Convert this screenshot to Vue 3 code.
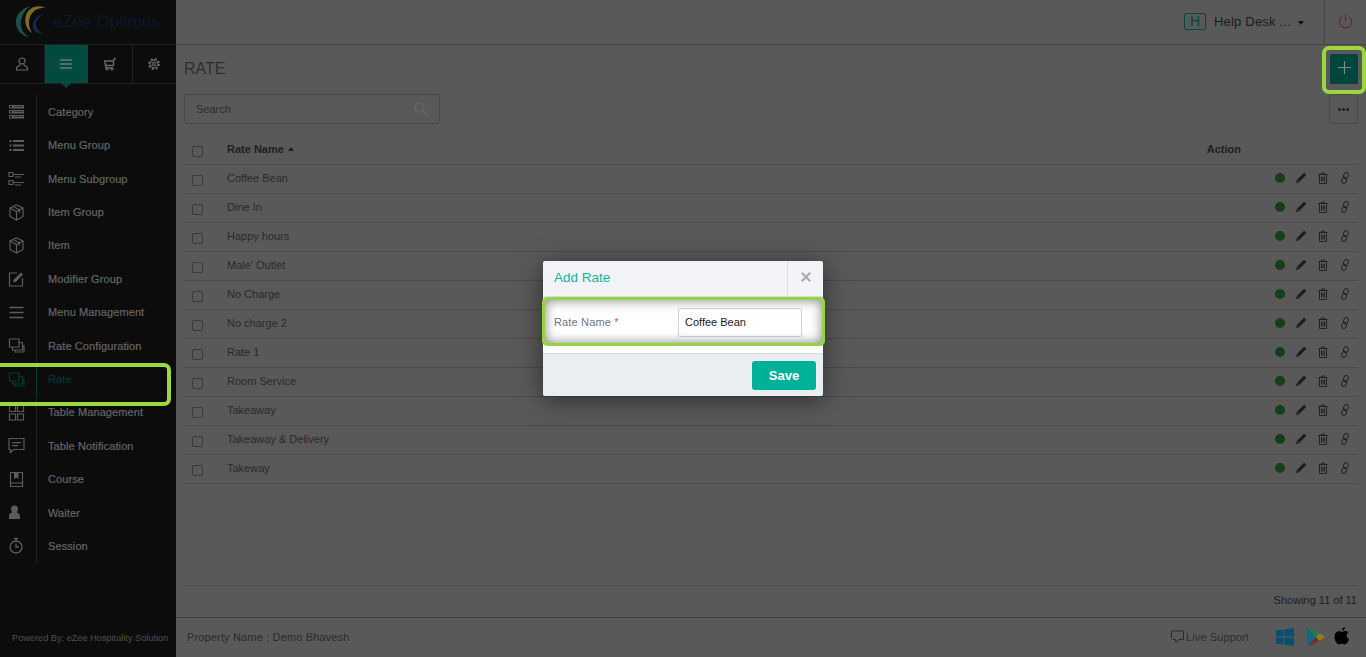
<template>
  <div class="app">
    <aside class="sidebar">
      <div class="logo">
        <svg width="34" height="34" viewBox="0 0 34 34">
          <path d="M15 1C6 4 0 10 1 19c1 7 6 12 13 13C8 28 5 23 6 16 7 10 10 5 15 1z" fill="#1d4f4d" />
          <path d="M31 3C23-1 14 2 11 10c-2 7 0 14 6 18-3-5-4-11-2-16 2-6 9-10 16-9z" fill="#7d6c20" />
          <path d="M29 9c-5 1-10 4-11 10-1 5 3 10 11 10-5-2-8-5-8-10 0-4 3-7 8-10z" fill="#14265a" />
        </svg>
        <span>eZee Optimus</span>
      </div>
      <div class="tabs">
        <div class="tab">
          <svg class="ico" viewBox="0 0 14 14"><circle cx="7" cy="4" r="3" /><path d="M5.5 7.5 1.5 10.5V13h11v-2.500l-4-3" /></svg>
        </div>
        <div class="tab active">
          <svg class="ico bars" viewBox="0 0 14 14"><path d="M1 3h12M1 7h12M1 11h12" /></svg>
        </div>
        <div class="tab">
          <svg class="ico" viewBox="0 0 14 14"><path d="M1 4h9.500l1-2.500H13M2 4l.5 4.500h8L10.500 4M3 8.500V11h7" stroke-width="1.5" /><circle cx="4" cy="12" r="1" /><circle cx="9" cy="12" r="1" /></svg>
        </div>
        <div class="tab">
          <svg class="ico" viewBox="0 0 14 14"><circle cx="7" cy="7" r="1.6" /><circle cx="7" cy="7" r="3.8" /><circle cx="7" cy="7" r="5" stroke-width="2" stroke-dasharray="2 1.93" /></svg>
        </div>
      </div>
      <ul class="nav">
        <li v-for="item in navItems" :key="item.label" :class="{ current: item.label === 'Rate' }">
          <span class="nav-icon">
            <svg width="17" height="17" viewBox="0 0 17 17" v-html="item.icon"></svg>
          </span>
          <span class="nav-label">{{ item.label }}</span>
        </li>
      </ul>
      <div class="powered">Powered By: eZee Hospitality Solution</div>
    </aside>

    <div class="page">
      <header class="topbar">
        <span class="h-box">H</span>
        <span class="help">Help Desk ...</span>
        <span class="caret"></span>
        <div class="power">
          <svg width="15" height="15" viewBox="0 0 15 15"><path d="M4 3a6 6 0 1 0 7 0M7.500 0v7" fill="none" stroke="#6a2626" stroke-width="1.1" /></svg>
        </div>
      </header>

      <main class="content">
        <div class="title-row">
          <h1>RATE</h1>
          <button class="add-btn">
            <svg width="13" height="13" viewBox="0 0 13 13"><path d="M6.500 0v13M0 6.500h13" stroke="#7c8986" stroke-width="1.2" /></svg>
          </button>
        </div>
        <div class="tools-row">
          <div class="search">
            <span>Search</span>
            <svg width="14" height="14" viewBox="0 0 14 14"><circle cx="5.500" cy="5.500" r="4.500" fill="none" stroke="#6a6a6a" stroke-width="1.2" /><path d="m9 9 4.500 4.500" stroke="#6a6a6a" stroke-width="1.6" /></svg>
          </div>
          <button class="more-btn"><i></i><i></i><i></i></button>
        </div>

        <div class="thead">
          <span class="check"></span>
          <span class="col-name">Rate Name <em class="sort"></em></span>
          <span class="col-action">Action</span>
        </div>
        <div v-for="rate in rates" :key="rate" class="row">
          <span class="check"></span>
          <span class="row-name">{{ rate }}</span>
          <span class="actions">
            <span class="dot"></span>
            <svg width="12" height="12" viewBox="0 0 12 12"><path d="M1 11l.8-3L8.500 1.300a1 1 0 0 1 1.400 0l.8.8a1 1 0 0 1 0 1.400L4 10.200z" fill="#1c1c1c" /><path d="M2.200 8.200l1.600 1.600" stroke="#5a5a5a" stroke-width=".6" /></svg>
            <svg width="12" height="12" viewBox="0 0 12 12" fill="none" stroke="#1c1c1c"><path d="M1.500 2.500h9M4.500 2.500v-1.500h3v1.500M2.500 2.500v9h7v-9M4.500 4.500v5M6 4.500v5M7.500 4.500v5" stroke-width=".9" /></svg>
            <svg width="12" height="12" viewBox="0 0 12 12" fill="none" stroke="#1c1c1c" stroke-width=".9"><g transform="rotate(20 6 6)"><rect x="3.800" y=".3" width="4.400" height="6.400" rx="2.200" /><rect x="3.800" y="5.300" width="4.400" height="6.400" rx="2.200" /></g></svg>
          </span>
        </div>

        <div class="spacer"></div>
        <div class="showing">Showing 11 of 11</div>
      </main>

      <footer class="foot">
        <span class="property">Property Name : Demo Bhavesh</span>
        <span class="live">
          <svg width="13" height="14" viewBox="0 0 13 14" fill="none" stroke="#2c2c2c"><path d="M.5 1h12v8.500H8L5 12.500 4.500 9.500H2L.5 8z" /></svg>
          Live Support
        </span>
        <svg class="store" width="18" height="18" viewBox="0 0 18 18" fill="#0a4f6e"><path d="M0 2.600 7.400 1.500v7H0zM8.300 1.400 18 0v8.500H8.300zM0 9.500h7.400v7L0 15.400zM8.300 9.500H18V18L8.300 16.600z" /></svg>
        <svg class="store play" width="19" height="20" viewBox="0 0 19 20"><path d="M1 0v20l9-10z" fill="#0f6b80" /><path d="M1 0l9 10 3.500-4z" fill="#2e7a4a" /><path d="M1 20l9-10 3.500 4z" fill="#7a2e2e" /><path d="M13.500 6 19 10l-5.500 4L10 10z" fill="#8f7f1c" /></svg>
        <svg class="store" width="16" height="19" viewBox="0 0 16 19" fill="#000"><path d="M11 0c.1 1.800-1.300 3.500-3 3.500C7.900 1.800 9.400.2 11 0zM8 4.800c.8 0 1.800-.9 3.300-.9 1.300 0 2.500.6 3.200 1.700-2.700 1.700-2.300 5.400.6 6.700-.8 2.200-2.600 5.200-4.300 5.200-1.100 0-1.500-.7-2.800-.7s-1.800.7-2.800.7C3 17.500.5 13.500.5 10c0-3.600 2.300-5.800 4.400-5.800 1.300 0 2.300.6 3.100.6z" /></svg>
      </footer>
    </div>

    <div class="overlay">
      <div class="modal">
        <div class="modal-head">
          <span class="modal-title">Add Rate</span>
          <span class="modal-close">
            <svg width="10" height="10" viewBox="0 0 10 10"><path d="M.8.800l8.400 8.400M9.200.800.800 9.200" stroke="#a9a9a9" stroke-width="2" /></svg>
          </span>
        </div>
        <div class="modal-body">
          <label for="rate-name">Rate Name <b>*</b></label>
          <input id="rate-name" type="text" value="Coffee Bean" />
        </div>
        <div class="modal-foot">
          <button class="save">Save</button>
        </div>
      </div>
    </div>

    <div class="mark mark-nav"></div>
    <div class="mark mark-add"></div>
    <div class="mark mark-field"></div>
  </div>
</template>

<script setup>
const stroke = 'fill="none" stroke="#5c5c5c" stroke-width="1.2"'

const cube = `<g ${stroke}><path d="M8.500 1 15 4v8.500L8.500 16 2 12.500V4zM2 4l6.500 3.500L15 4M8.500 7.500V16M5 2.500l6.500 3.300v3"/></g>`
const copies = (color) =>
  `<g fill="none" stroke="${color}" stroke-width="1.2"><path d="M1.500 2h9.500v8H1.500zM4.500 10v3h10V5.500H11M7 13v2h9V8"/></g>`

const navItems = [
  {
    label: 'Category',
    icon: `<g fill="#5c5c5c"><path d="M1 2h15v3.500H1zM1 7h15v3.500H1zM1 12h15v3.500H1z"/></g><g fill="#0c0c0c"><path d="M2 3h2v1.500H2zM2 8h2v1.500H2zM2 13h2v1.500H2zM6 3.500h9v.5H6zM6 8.500h9v.5H6zM6 13.500h9v.5H6z"/></g>`,
  },
  {
    label: 'Menu Group',
    icon: `<g fill="#5c5c5c"><path d="M1.500 3h2v2h-2zM1.500 7.500h2v2h-2zM1.500 12h2v2h-2zM5 3h11v2H5zM5 7.500h11v2H5zM5 12h11v2H5z"/></g>`,
  },
  {
    label: 'Menu Subgroup',
    icon: `<g ${stroke}><path d="M1 2.500h4v4H1zM1 10.500h4v4H1z"/></g><g fill="#5c5c5c"><path d="M5 4h11v1H5zM7 6.500h6v1H7zM5 12h11v1H5zM7 14.500h6v1H7z"/></g>`,
  },
  { label: 'Item Group', icon: cube },
  { label: 'Item', icon: cube },
  {
    label: 'Modifier Group',
    icon: `<g ${stroke}><path d="M9 3H1.500v13h13V8"/></g><path d="M5 12.500l.8-3L13 2.500l2 2-7 7.300z" fill="#5c5c5c"/>`,
  },
  {
    label: 'Menu Management',
    icon: `<path d="M1.500 3.500h14M1.500 8.500h14M1.500 13.500h14" fill="none" stroke="#5c5c5c" stroke-width="1.7"/>`,
  },
  { label: 'Rate Configuration', icon: copies('#5c5c5c') },
  { label: 'Rate', icon: copies('#003a32') },
  {
    label: 'Table Management',
    icon: `<g ${stroke}><path d="M1.500 1.500h6v6h-6zM9.500 1.500h6v6h-6zM1.500 10h6v6h-6zM9.500 10h6v6h-6z"/></g>`,
  },
  {
    label: 'Table Notification',
    icon: `<g ${stroke}><path d="M1 1.500h15v11H5.500L2.500 15.500v-3H1z"/></g><path d="M4 5h9v1.200H4zM4 8h6v1.200H4z" fill="#5c5c5c"/>`,
  },
  {
    label: 'Course',
    icon: `<g ${stroke}><path d="M2.500 1.500h12v14h-12zM2.500 12h12"/></g><path d="M6 1.500h4.500V8L8.200 6.500 6 8z" fill="#5c5c5c"/>`,
  },
  {
    label: 'Waiter',
    icon: `<circle cx="6.500" cy="5" r="3.500" fill="#5c5c5c"/><path d="M1 15v-2.500c0-3 2-4.500 5.500-4.500s5.500 1.500 5.500 4.500V15z" fill="#5c5c5c"/>`,
  },
  {
    label: 'Session',
    icon: `<g fill="none" stroke="#5c5c5c" stroke-width="1.3"><circle cx="8" cy="10" r="6"/><path d="M6 1.500h4M8 1.500v2.500M8 6.500V10h3"/></g>`,
  },
]

const rates = [
  'Coffee Bean',
  'Dine In',
  'Happy hours',
  "Male' Outlet",
  'No Charge',
  'No charge 2',
  'Rate 1',
  'Room Service',
  'Takeaway',
  'Takeaway & Delivery',
  'Takeway',
]
</script>

<style>
html,
body {
  margin: 0;
  background: #595959;
}
</style>

<style scoped>
.app {
  display: flex;
  height: 657px;
  overflow: hidden;
  position: relative;
  font-family: "Liberation Sans", Arial, sans-serif;
  font-size: 11px;
  color: #2a2a2a;
  background: #595959;
}

/* the page under the modal is painted already dimmed */
.sidebar {
  width: 176px;
  flex: none;
  background: #0c0c0c;
  display: flex;
  flex-direction: column;
}

.logo {
  height: 44px;
  display: flex;
  align-items: center;
  padding-left: 15px;
  gap: 4px;
  border-bottom: 1px solid #222;
}

.logo span {
  font-size: 17px;
  color: #081a2c;
}

.tabs {
  display: flex;
  height: 38px;
  border-bottom: 1px solid #222;
}

.tab {
  flex: 1;
  display: flex;
  align-items: center;
  justify-content: center;
  border-right: 1px solid #222;
  position: relative;
}

.tab:last-child {
  border-right: 0;
}

.tab.active {
  background: #004a3f;
  border-right: 0;
}

.tab.active::after {
  content: '';
  position: absolute;
  left: 50%;
  bottom: -5px;
  margin-left: -5px;
  border-left: 5px solid transparent;
  border-right: 5px solid transparent;
  border-top: 5px solid #004a3f;
}

.ico {
  width: 14px;
  height: 14px;
  fill: none;
  stroke: #666;
  stroke-width: 1.2;
}

.ico.bars {
  stroke: #6e7a77;
  stroke-width: 1.5;
}

.nav {
  list-style: none;
  margin: 11.2px 0 0;
  padding: 0;
}

.nav li {
  display: flex;
  height: 33.4px;
  align-items: center;
}

.nav-icon {
  width: 37px;
  height: 100%;
  flex: none;
  display: flex;
  align-items: center;
  justify-content: center;
  padding-right: 3px;
  box-sizing: border-box;
  border-right: 1px solid #222;
}

.nav-label {
  padding-left: 11px;
  font-size: 11px;
  letter-spacing: 0.1px;
  color: #666;
  -webkit-text-stroke: 0.2px #666;
}

.nav li.current .nav-icon {
  border-right-color: #003a32;
}

.nav li.current .nav-label {
  color: #003a32;
  -webkit-text-stroke-color: #003a32;
}

.powered {
  margin-top: auto;
  padding: 0 0 14px 12px;
  font-size: 9.2px;
  color: #4f4f4f;
  white-space: nowrap;
}

.page {
  flex: 1;
  min-width: 0;
  display: flex;
  flex-direction: column;
}

.topbar {
  height: 44px;
  flex: none;
  display: flex;
  align-items: center;
  justify-content: flex-end;
  border-bottom: 1px solid #454545;
}

.h-box {
  width: 20px;
  height: 15px;
  border: 1px solid #004a3f;
  border-radius: 2px;
  color: #004a3f;
  font-size: 14px;
  line-height: 15px;
  text-align: center;
  margin: 0 8px 1px 0;
}

.help {
  font-size: 13px;
  letter-spacing: 0.2px;
  margin-bottom: 1px;
  color: #1c1c1c;
}

.caret {
  border-left: 3.5px solid transparent;
  border-right: 3.5px solid transparent;
  border-top: 4px solid #111;
  margin: 2px 20px 0 7px;
}

.power {
  width: 42px;
  height: 100%;
  padding-bottom: 2px;
  box-sizing: border-box;
  display: flex;
  align-items: center;
  justify-content: center;
  border-left: 1px solid #454545;
}

.content {
  flex: 1;
  display: flex;
  flex-direction: column;
  padding: 0 8px;
  min-height: 0;
}

.title-row {
  display: flex;
  justify-content: space-between;
  align-items: center;
  height: 49px;
}

.title-row h1 {
  margin: 0 0 2px;
  font-size: 16px;
  font-weight: normal;
  color: #2e2e2e;
}

.add-btn {
  width: 28px;
  height: 30px;
  padding: 0 0 4px;
  margin-bottom: 1px;
  border: 0;
  border-radius: 2px;
  background: #00463c;
  display: flex;
  align-items: center;
  justify-content: center;
}

.tools-row {
  display: flex;
  justify-content: space-between;
  height: 30px;
  margin-bottom: 12px;
}

.search {
  width: 256px;
  border: 1px solid #4a4a4a;
  border-radius: 2px;
  display: flex;
  align-items: center;
  justify-content: space-between;
  padding: 0 11px;
  box-sizing: border-box;
  color: #2e2e2e;
}

.more-btn {
  width: 29px;
  padding: 0;
  background: none;
  border: 1px solid #4a4a4a;
  border-radius: 2px;
  display: flex;
  align-items: center;
  justify-content: center;
  gap: 1px;
}

.more-btn i {
  width: 3px;
  height: 3px;
  border-radius: 50%;
  background: #1e1e1e;
}

.thead,
.row {
  display: flex;
  align-items: center;
  height: 28px;
  border-bottom: 1px solid #4b4b4b;
  padding-left: 8px;
}

.check {
  width: 9px;
  height: 9px;
  border: 1px solid #3a3a3a;
  border-radius: 2px;
  margin-top: 3px;
  flex: none;
}

.col-name {
  font-weight: bold;
  margin: 0 0 2px 24px;
  color: #1e1e1e;
}

.sort {
  display: inline-block;
  border-left: 3.5px solid transparent;
  border-right: 3.5px solid transparent;
  border-bottom: 4px solid #1e1e1e;
  vertical-align: 2px;
  margin-left: 1px;
}

.col-action {
  margin: 0 117px 2px auto;
  font-weight: bold;
  color: #1e1e1e;
}

.row-name {
  margin-left: 24px;
  margin-bottom: 2px;
  color: #2a2a2a;
}

.actions {
  margin: 0 0 2px auto;
  display: flex;
  align-items: center;
  gap: 10px;
  padding-right: 7px;
}

.dot {
  width: 10px;
  height: 10px;
  border-radius: 50%;
  background: #173e1a;
}

.spacer {
  flex: 1;
  border-bottom: 1px solid #4b4b4b;
}

.showing {
  height: 31px;
  line-height: 29px;
  text-align: right;
  color: #1e1e1e;
  padding-right: 1px;
}

.foot {
  height: 40px;
  box-sizing: border-box;
  flex: none;
  display: flex;
  align-items: center;
  border-top: 1px solid #3f3f3f;
  padding: 0 16px 2px 11px;
  gap: 9px;
}

.property {
  margin-right: auto;
  letter-spacing: 0.15px;
  color: #2a2a2a;
}

.live {
  display: flex;
  align-items: center;
  gap: 2px;
  margin-right: 18px;
  letter-spacing: 0.1px;
  color: #2e2e2e;
}

.play {
  margin-left: 3px;
}

.overlay {
  position: absolute;
  inset: 0;
  display: flex;
  align-items: center;
  justify-content: center;
}

.modal {
  width: 280px;
  height: 135px;
  border-radius: 2px;
  overflow: hidden;
  display: flex;
  flex-direction: column;
  box-shadow: 0 4px 24px rgba(0, 0, 0, 0.5);
}

.modal-head {
  height: 35px;
  flex: none;
  display: flex;
  justify-content: space-between;
  background: #f1f3f7;
}

.modal-title {
  padding: 9px 0 0 11px;
  font-size: 13.5px;
  color: #14b39b;
}

.modal-close {
  width: 36px;
  padding-bottom: 4px;
  border-left: 1px solid #d8dde5;
  display: flex;
  align-items: center;
  justify-content: center;
  box-sizing: border-box;
}

.modal-body {
  flex: 1;
  background: #fff;
  display: flex;
  align-items: center;
  padding: 0 21px 6px 11px;
  border-top: 1px solid #d5dce6;
  border-bottom: 1px solid #d5dce6;
}

.modal-body label {
  width: 124px;
  flex: none;
  letter-spacing: 0.15px;
  color: #6b7688;
}

.modal-body b {
  font-weight: normal;
  color: #f0484f;
}

.modal-body input {
  width: 100%;
  height: 29px;
  box-sizing: border-box;
  border: 1px solid #ccd6e6;
  border-radius: 2px;
  padding: 0 6px;
  font: inherit;
  color: #1a1a1a;
  outline: none;
}

.modal-foot {
  height: 42px;
  flex: none;
  background: #ebeef1;
  display: flex;
  align-items: center;
  justify-content: flex-end;
  padding: 1px 7px 0 0;
  box-sizing: border-box;
}

.save {
  width: 64px;
  height: 29px;
  border: 0;
  border-radius: 3px;
  background: #00b19a;
  color: #fff;
  font-family: inherit;
  font-size: 13px;
  font-weight: bold;
}

/* green annotation boxes drawn over the screenshot */
.mark {
  position: absolute;
  box-sizing: border-box;
  border: 4px solid #9bd83e;
  border-radius: 7px;
}

.mark-nav {
  left: -6px;
  top: 363px;
  width: 177px;
  height: 43px;
}

.mark-add {
  left: 1322px;
  top: 46px;
  width: 44px;
  height: 48px;
}

.mark-field {
  left: 542px;
  top: 297px;
  width: 283px;
  height: 49px;
  border-width: 3px;
  border-color: #97d243;
  border-radius: 5px;
  box-shadow: inset 0 0 12px rgba(0, 0, 0, 0.5);
}
</style>
